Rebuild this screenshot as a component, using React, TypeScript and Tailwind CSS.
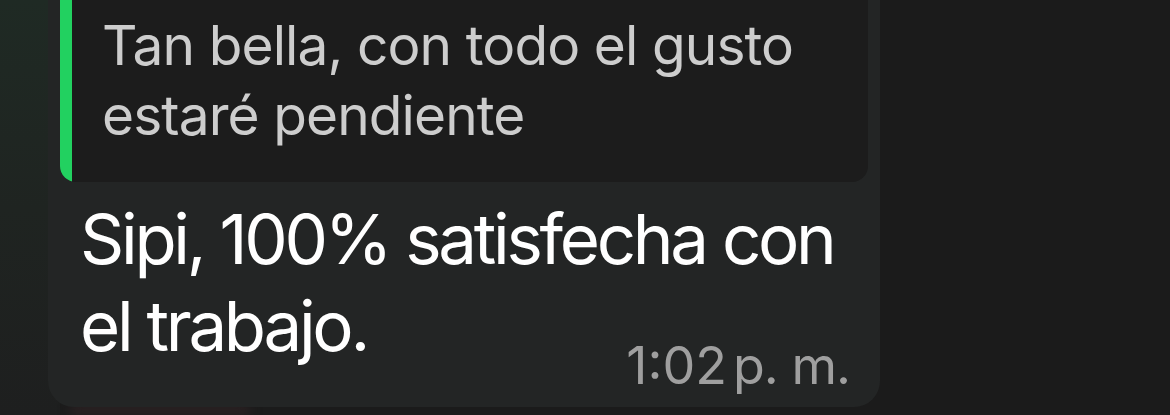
export default function App() {
  return (
    <div
      className="relative h-[415px] w-[1170px] overflow-hidden bg-[#1b1b1b]"
      style={{ fontFamily: "Inter, 'Noto Sans', sans-serif" }}
    >
      {/* wallpaper tint along the left edge */}
      <div className="pointer-events-none absolute inset-y-0 left-0 w-[60px] bg-gradient-to-b from-[#1f2a24] via-[#1f2421] to-[#1e1f1f]" />
      <div className="pointer-events-none absolute bottom-0 left-[70px] h-[10px] w-[180px] rounded-full bg-[#2f2224] blur-[6px]" />

      <div className="relative flex pl-[48px]">
        <div className="-mt-[20px] w-[832px] rounded-b-[26px] bg-[#232525] pb-[11px] pl-[12px] pr-[12px] pt-[0px]">
          {/* quoted reply */}
          <div className="flex overflow-hidden rounded-b-[16px] bg-[#1c1c1c]">
            <div className="w-[12px] shrink-0 rounded-bl-[14px] bg-[#22d160]" />
            <p className="whitespace-nowrap pb-[32px] pl-[30px] pt-[30px] text-[55px] leading-[70px] tracking-[-0.9px] text-[#cdcdcd]">
              Tan bella, con todo el gusto
              <br />
              estaré pendiente
            </p>
          </div>

          <p className="mt-[14px] whitespace-nowrap pl-[20px] text-[69px] leading-[87px] tracking-[-3.3px] text-white">
            Sipi, 100% satisfecha con
            <br />
            el trabajo.
          </p>
          <div className="-mt-[34px] flex justify-end pr-[18px] text-[52px] leading-[60px] text-[#9f9f9f]">
            <span className="tracking-[0px]">1:02</span>
            <span className="ml-[6px] tracking-[-1px]">p. m.</span>
          </div>
        </div>
      </div>
    </div>
  );
}
